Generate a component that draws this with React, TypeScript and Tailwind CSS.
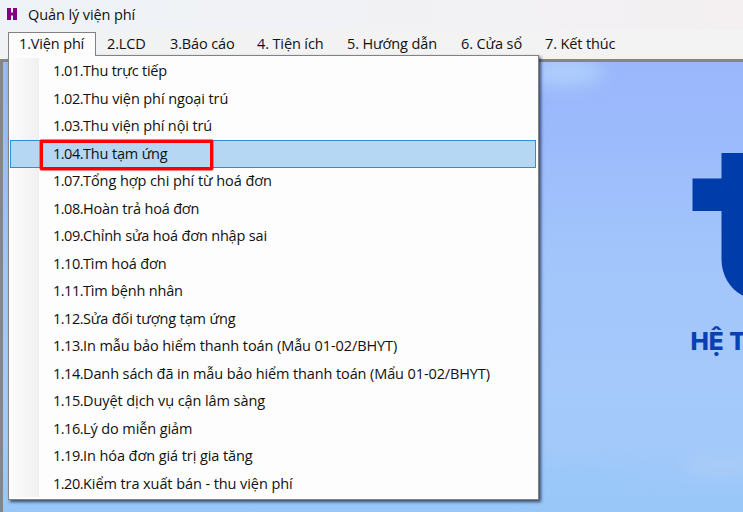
import React from "react";

type Item = { code: string; label: string; spacing: string };

const menus: { label: string; box: string }[] = [
  { label: "2.LCD", box: "ml-[11px] w-[63px]" },
  { label: "3.Báo cáo", box: "w-[87px]" },
  { label: "4. Tiện ích", box: "w-[90px]" },
  { label: "5. Hướng dẫn", box: "w-[114px]" },
  { label: "6. Cửa sổ", box: "w-[84px]" },
  { label: "7. Kết thúc", box: "w-[90px]" },
];

const items: Item[] = [
  { code: "1.01.", label: "Thu trực tiếp", spacing: "tracking-[-0.22px]" },
  { code: "1.02.", label: "Thu viện phí ngoại trú", spacing: "tracking-[-0.1px]" },
  { code: "1.03.", label: "Thu viện phí nội trú", spacing: "tracking-[-0.12px]" },
  { code: "1.04.", label: "Thu tạm ứng", spacing: "tracking-[-0.16px]" },
  { code: "1.07.", label: "Tổng hợp chi phí từ hoá đơn", spacing: "tracking-[-0.07px]" },
  { code: "1.08.", label: "Hoàn trả hoá đơn", spacing: "tracking-[-0.18px]" },
  { code: "1.09.", label: "Chỉnh sửa hoá đơn nhập sai", spacing: "tracking-[-0.18px]" },
  { code: "1.10.", label: "Tìm hoá đơn", spacing: "tracking-[-0.12px]" },
  { code: "1.11.", label: "Tìm bệnh nhân", spacing: "tracking-[-0.18px]" },
  { code: "1.12.", label: "Sửa đối tượng tạm ứng", spacing: "tracking-[-0.14px]" },
  { code: "1.13.", label: "In mẫu bảo hiểm thanh toán (Mẫu 01-02/BHYT)", spacing: "tracking-[-0.09px]" },
  { code: "1.14.", label: "Danh sách đã in mẫu bảo hiểm thanh toán (Mẩu 01-02/BHYT)", spacing: "tracking-[-0.11px]" },
  { code: "1.15.", label: "Duyệt dịch vụ cận lâm sàng", spacing: "tracking-[-0.08px]" },
  { code: "1.16.", label: "Lý do miễn giảm", spacing: "tracking-[-0.1px]" },
  { code: "1.19.", label: "In hóa đơn giá trị gia tăng", spacing: "tracking-[-0.08px]" },
  { code: "1.20.", label: "Kiểm tra xuất bán - thu viện phí", spacing: "tracking-[-0.08px]" },
];

function Dropdown() {
  return (
    <div className="absolute left-[8px] top-[55px] h-[445px] w-[531px] border border-[#828282] bg-[#fdfdfd] pt-[2px] shadow-[2px_2px_3px_rgba(20,35,65,0.75)]">
      <div className="absolute bottom-[2px] left-[1px] top-[2px] w-[29px] bg-linear-to-r from-[#fcfcfc] to-[#f0f0f0]" />
      <div className="relative flex flex-col">
        {items.map((item, i) => (
          <div
            key={item.code}
            className={`ml-[1px] mr-[2px] flex h-[27.47px] items-center whitespace-nowrap border pl-[42px] ${
              i === 3 ? "border-[#2490e0] bg-[#b5d7f3]" : "border-transparent"
            }`}
          >
            <span className="tracking-[-0.5px]">{item.code}</span>
            <span className={item.spacing}>{item.label}</span>
          </div>
        ))}
      </div>
      <div className="absolute left-[31px] top-[84px] h-[30px] w-[173px] rounded-[1px] border-[3.5px] border-[#fb0007] shadow-[0_0_0_0.4px_#fb0007]" />
    </div>
  );
}

function Wallpaper() {
  return (
    <svg className="block h-full w-full" viewBox="0 0 740 450" preserveAspectRatio="none">
      <defs>
        <linearGradient id="sky" x1="0" y1="0" x2="0" y2="1">
          <stop offset="0" stopColor="#9ab7fb" />
          <stop offset="0.16" stopColor="#9bbafc" />
          <stop offset="0.42" stopColor="#a2c5fb" />
          <stop offset="0.7" stopColor="#a5c9fb" />
          <stop offset="0.85" stopColor="#a2c9fa" />
          <stop offset="1" stopColor="#98c7f8" />
        </linearGradient>
        <filter id="haze" x="-50%" y="-100%" width="200%" height="300%">
          <feGaussianBlur stdDeviation="8" />
        </filter>
      </defs>
      <rect width="740" height="450" fill="url(#sky)" />
      <g filter="url(#haze)">
        <ellipse cx="562" cy="10" rx="38" ry="14" fill="#aecdfc" />
        <ellipse cx="718" cy="403" rx="36" ry="10" fill="#aaccf8" />
        <ellipse cx="575" cy="420" rx="60" ry="14" fill="#9ac8f8" />
      </g>
      <path d="M718.500 91H745V236C728 230 718.500 214 718.500 197V149H689.500V116.500H718.500Z" fill="#003caa" />
      <text x="687.500" y="288" fill="#0742ae" className="[font-family:Inter,sans-serif] text-[24.5px] font-extrabold">
        HỆ T
      </text>
    </svg>
  );
}

export default function App() {
  return (
    <div className="relative flex h-[512px] w-[743px] flex-col overflow-hidden bg-[#f2f2f3] font-['Open_Sans',sans-serif] text-[14.5px] leading-none text-[#111111]">
      <header className="flex h-[30px] shrink-0 items-center bg-linear-to-r from-[#eef3f7] to-[#f4f0f2] pl-[7px]">
        <svg className="-mt-[2px] h-[12px] w-[10px]" viewBox="0 0 10 12">
          <path d="M0 0H4V4.500H6V0H10V12H6V7.500H4V12H0Z" fill="#850080" />
        </svg>
        <h1 className="ml-[11px] text-[14.5px] font-normal tracking-[-0.1px]">Quản lý viện phí</h1>
      </header>
      <nav className="flex h-[29px] shrink-0 items-start bg-linear-to-r from-[#f1f2f3] to-[#f4f3f3] pl-[8px] pt-[2px]">
        <div className="flex h-[25px] w-[88px] items-center border border-b-0 border-[#828282] bg-[#fcfcfc] pb-px pl-[10px] tracking-[-0.15px]">
          1.Viện phí
        </div>
        {menus.map((m) => (
          <div key={m.label} className={`flex h-[25px] shrink-0 items-center whitespace-nowrap tracking-[-0.12px] ${m.box}`}>
            {m.label}
          </div>
        ))}
      </nav>
      <main className="min-h-0 flex-1 border-l-[3px] border-t-[3px] border-[#858585]">
        <Wallpaper />
      </main>
      <Dropdown />
      <div className="absolute left-[9px] top-[54px] h-[3px] w-[86px] bg-[#fdfdfd]" />
    </div>
  );
}
